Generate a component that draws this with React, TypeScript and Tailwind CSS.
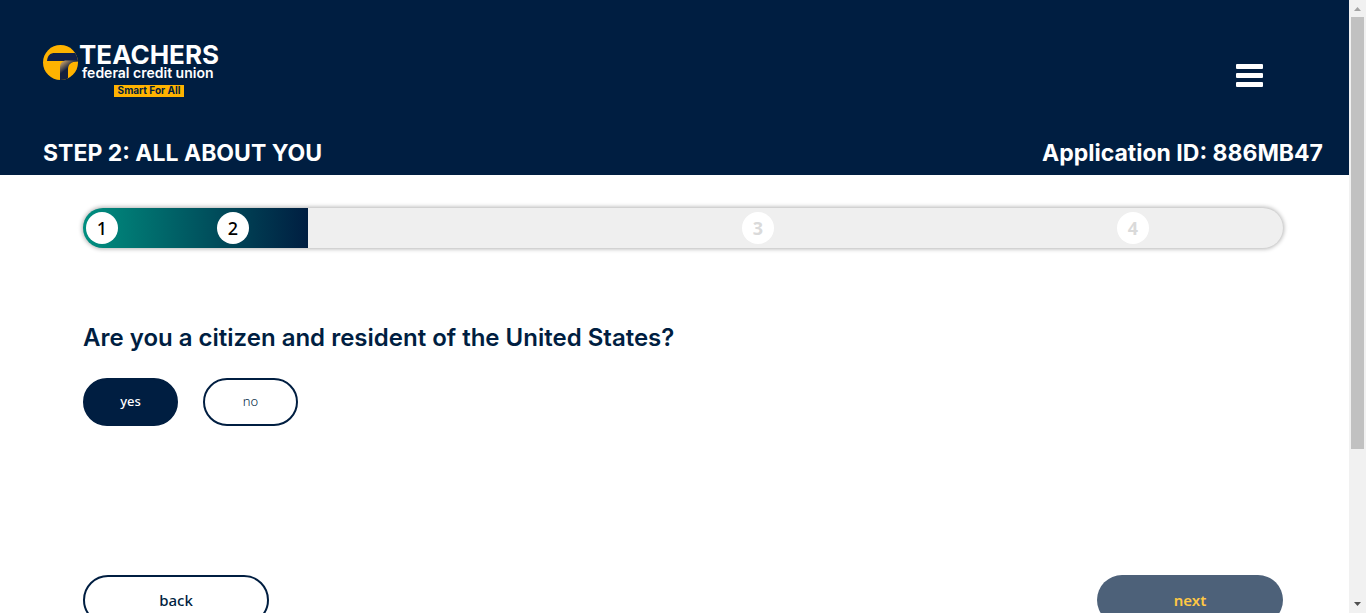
import React, { useState } from "react";

const steps = [
  { id: 1, done: true },
  { id: 2, done: true },
  { id: 3, done: false },
  { id: 4, done: false },
];

function Logo() {
  return (
    <a href="#home" aria-label="Teachers Federal Credit Union" className="block">
      <svg width="178" height="56" viewBox="0 0 178 56" className="overflow-visible">
        <defs>
          <linearGradient id="stem" x1="0" y1="0" x2="0.7" y2="1">
            <stop offset="0" stopColor="#ffb300" />
            <stop offset="0.15" stopColor="#a98b62" />
            <stop offset="0.45" stopColor="#13203f" />
          </linearGradient>
          <clipPath id="disc">
            <circle cx="17.5" cy="19.5" r="17.5" />
          </clipPath>
        </defs>
        <circle cx="17.5" cy="19.5" r="17.5" fill="#ffb300" />
        <g clipPath="url(#disc)">
          <path d="M4 18 C4.500 12.500 7 10 12 10 H36 V18 Z" fill="#10204a" />
          <path d="M17 38 V24 C17 20.500 18.500 18.500 22 17.500 H36 V18.500 C28 18.500 25 21 25 27 V38 Z" fill="url(#stem)" />
        </g>
        <text x="36" y="21" fontSize="26" fontWeight="700" fill="#ffffff" className="font-['Inter',sans-serif]">TEACHERS</text>
        <text x="39" y="35" fontSize="14" fontWeight="600" fill="#ffffff" className="font-['Inter',sans-serif]">federal credit union</text>
        <rect x="71" y="42" width="70" height="12" fill="#ffb300" />
        <text x="106" y="51" textAnchor="middle" fontSize="10" fontWeight="700" fill="#001e41" className="font-['Inter',sans-serif]">Smart For All</text>
      </svg>
    </a>
  );
}

function Header() {
  return (
    <header className="bg-[#001e41] px-[43px] pt-[43px] text-white">
      <div className="flex items-start justify-between">
        <Logo />
        <button type="button" aria-label="Open menu" className="mt-[21px] mr-[60px] flex flex-col gap-1">
          <span className="h-[5px] w-[27px] rounded-[1px] bg-white" />
          <span className="h-[5px] w-[27px] rounded-[1px] bg-white" />
          <span className="h-[5px] w-[27px] rounded-[1px] bg-white" />
        </button>
      </div>
      <div className="flex h-[76px] items-end justify-between pb-2 text-[23px] leading-7 font-bold">
        <h1>STEP 2: ALL ABOUT YOU</h1>
        <p>Application ID: 886MB47</p>
      </div>
    </header>
  );
}

function Progress() {
  return (
    <ol
      aria-label="Application progress"
      className="grid h-10 grid-cols-[35fr_131fr_525fr_375fr_134fr] items-center rounded-full bg-[#efefef] bg-[linear-gradient(90deg,#008f80,#001e41)] bg-[length:18.75%_100%] bg-no-repeat font-['Noto_Sans',sans-serif] shadow-[0_0_4px_1px_rgba(0,0,0,0.3)]"
    >
      {steps.map((step) => (
        <li
          key={step.id}
          className={
            step.done
              ? "flex size-8 items-center justify-center justify-self-end rounded-full bg-white text-lg font-medium text-black"
              : "flex size-8 items-center justify-center justify-self-end rounded-full bg-white text-lg font-bold text-[#dadada]"
          }
        >
          {step.id}
        </li>
      ))}
    </ol>
  );
}

function Scrollbar() {
  return (
    <div aria-hidden="true" className="fixed inset-y-0 right-0 flex w-[17px] flex-col items-center bg-[#f1f1f1]">
      <svg width="17" height="17" viewBox="0 0 17 17">
        <path d="M5 11 L8.500 7 L12 11 Z" fill="#a3a3a3" />
      </svg>
      <div className="w-full flex-1 px-[2px]">
        <div className="h-[74.6%] bg-[#c1c1c1]" />
      </div>
      <svg width="17" height="17" viewBox="0 0 17 17">
        <path d="M5 6 L8.500 10 L12 6 Z" fill="#505050" />
      </svg>
    </div>
  );
}

export default function App() {
  const [answer, setAnswer] = useState("yes");
  const choice = "h-12 w-[95px] rounded-full border-2 border-[#001e41] text-[13px]";
  return (
    <div className="h-screen overflow-hidden bg-white font-['Inter',sans-serif] text-[#001e41]">
      <Header />
      <main className="mx-auto max-w-[1200px] pt-[33px]">
        <Progress />
        <h2 id="question" className="mt-[76px] text-2xl leading-7 font-semibold">
          Are you a citizen and resident of the United States?
        </h2>
        <div role="group" aria-labelledby="question" className="mt-[26px] flex gap-[25px] font-['Noto_Sans',sans-serif]">
          {["yes", "no"].map((value) => (
            <button
              key={value}
              type="button"
              aria-pressed={answer === value}
              onClick={() => setAnswer(value)}
              className={answer === value ? `${choice} bg-[#001e41] font-medium text-white` : `${choice} bg-white font-light`}
            >
              {value}
            </button>
          ))}
        </div>
        <div className="mt-[149px] flex justify-between font-['Noto_Sans',sans-serif] text-[15px]">
          <button type="button" className="h-[50px] w-[186px] rounded-full border-2 border-[#001e41] bg-white font-medium">
            back
          </button>
          <button type="button" className="h-[50px] w-[186px] rounded-full bg-[#4d6179] font-semibold text-[#ffc844]">
            next
          </button>
        </div>
      </main>
      <Scrollbar />
    </div>
  );
}
